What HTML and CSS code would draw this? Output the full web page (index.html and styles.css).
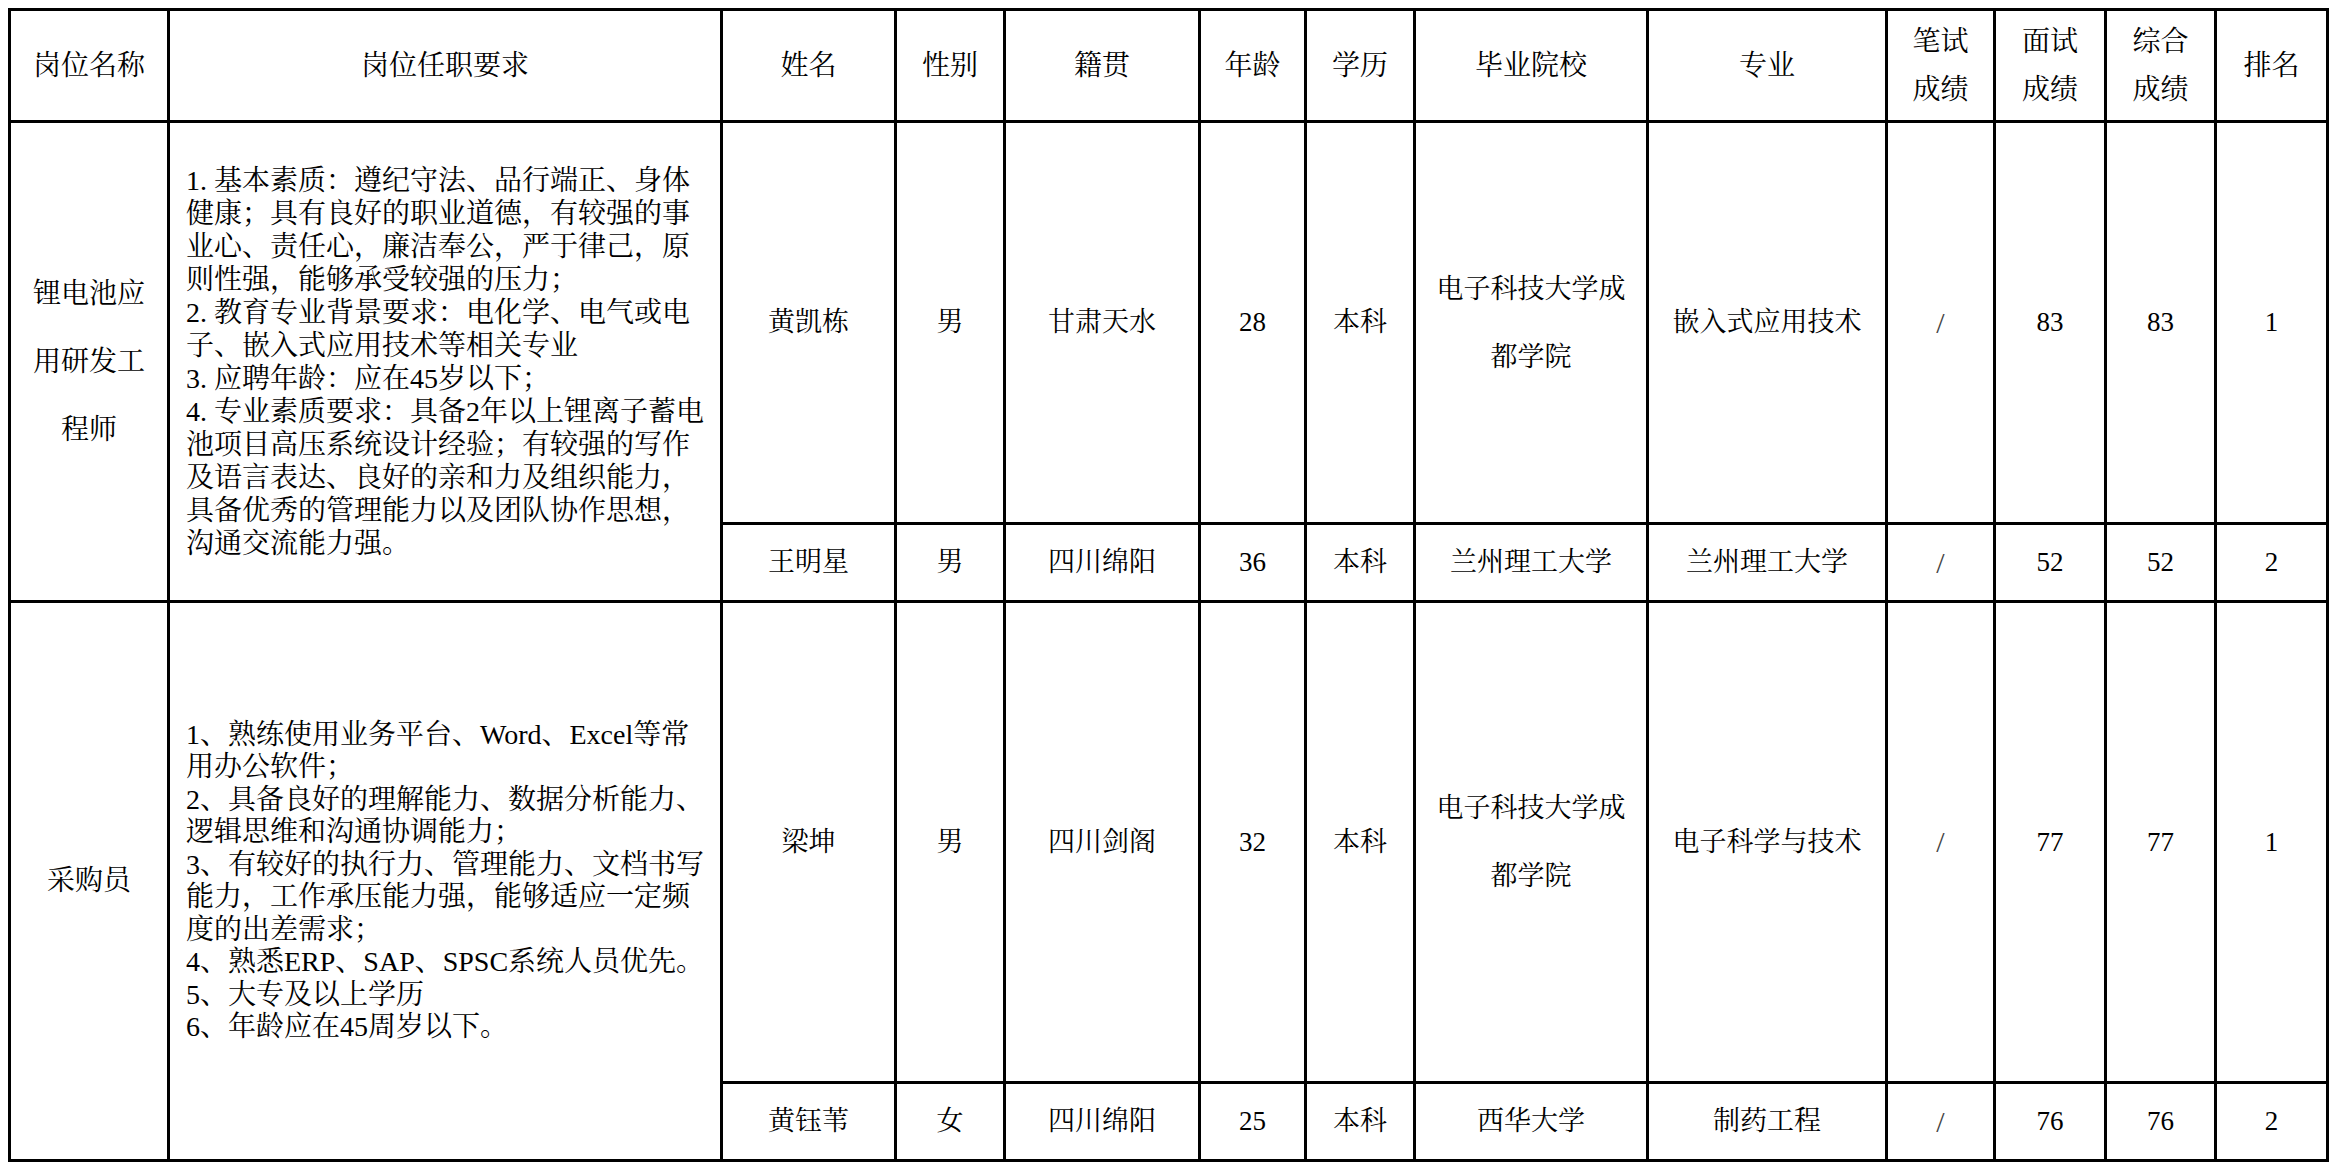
FILE: index.html
```html
<!DOCTYPE html>
<html lang="zh-CN">
<head>
<meta charset="utf-8">
<title>岗位拟录用人员名单</title>
<link rel="stylesheet" href="styles.css">
</head>
<body>
<table class="grid">
  <colgroup>
    <col class="c-post"><col class="c-req"><col class="c-name"><col class="c-sex"><col class="c-home"><col class="c-age"><col class="c-edu"><col class="c-school"><col class="c-major"><col class="c-s1"><col class="c-s2"><col class="c-s3"><col class="c-rank">
  </colgroup>
  <thead>
    <tr class="r-head">
      <th>岗位名称</th>
      <th>岗位任职要求</th>
      <th>姓名</th>
      <th>性别</th>
      <th>籍贯</th>
      <th>年龄</th>
      <th>学历</th>
      <th>毕业院校</th>
      <th>专业</th>
      <th class="two">笔试<br>成绩</th>
      <th class="two">面试<br>成绩</th>
      <th class="two">综合<br>成绩</th>
      <th>排名</th>
    </tr>
  </thead>
  <tbody>
    <tr class="r-a1">
      <td rowspan="2" class="post">锂电池应<br>用研发工<br>程师</td>
      <td rowspan="2" class="req">1.&nbsp;基本素质：遵纪守法、品行端正、身体<br>健康；具有良好的职业道德，有较强的事<br>业心、责任心，廉洁奉公，严于律己，原<br>则性强，能够承受较强的压力；<br>2.&nbsp;教育专业背景要求：电化学、电气或电<br>子、嵌入式应用技术等相关专业<br>3.&nbsp;应聘年龄：应在45岁以下；<br>4.&nbsp;专业素质要求：具备2年以上锂离子蓄电<br>池项目高压系统设计经验；有较强的写作<br>及语言表达、良好的亲和力及组织能力，<br>具备优秀的管理能力以及团队协作思想，<br>沟通交流能力强。</td>
      <td>黄凯栋</td>
      <td>男</td>
      <td>甘肃天水</td>
      <td>28</td>
      <td>本科</td>
      <td class="school">电子科技大学成<br>都学院</td>
      <td>嵌入式应用技术</td>
      <td class="slash">/</td>
      <td>83</td>
      <td>83</td>
      <td>1</td>
    </tr>
    <tr class="r-a2">
      <td>王明星</td>
      <td>男</td>
      <td>四川绵阳</td>
      <td>36</td>
      <td>本科</td>
      <td>兰州理工大学</td>
      <td>兰州理工大学</td>
      <td class="slash">/</td>
      <td>52</td>
      <td>52</td>
      <td>2</td>
    </tr>
    <tr class="r-b1">
      <td rowspan="2" class="post">采购员</td>
      <td rowspan="2" class="req req-b">1、熟练使用业务平台、Word、Excel等常<br>用办公软件；<br>2、具备良好的理解能力、数据分析能力、<br>逻辑思维和沟通协调能力；<br>3、有较好的执行力、管理能力、文档书写<br>能力，工作承压能力强，能够适应一定频<br>度的出差需求；<br>4、熟悉ERP、SAP、SPSC系统人员优先。<br>5、大专及以上学历<br>6、年龄应在45周岁以下。</td>
      <td>梁坤</td>
      <td>男</td>
      <td>四川剑阁</td>
      <td>32</td>
      <td>本科</td>
      <td class="school">电子科技大学成<br>都学院</td>
      <td>电子科学与技术</td>
      <td class="slash">/</td>
      <td>77</td>
      <td>77</td>
      <td>1</td>
    </tr>
    <tr class="r-b2">
      <td>黄钰苇</td>
      <td>女</td>
      <td>四川绵阳</td>
      <td>25</td>
      <td>本科</td>
      <td>西华大学</td>
      <td>制药工程</td>
      <td class="slash">/</td>
      <td>76</td>
      <td>76</td>
      <td>2</td>
    </tr>
  </tbody>
</table>
</body>
</html>
```

FILE: styles.css
```css
html, body {
  margin: 0;
  padding: 0;
  background: #ffffff;
}

.grid {
  border-collapse: collapse;
  table-layout: fixed;
  width: 2321px;
  margin: 8px 0 0 8px;
  font-family: "Liberation Serif", "Noto Serif CJK SC", "Noto Sans CJK SC", serif;
  color: #000000;
}

.c-post   { width: 159px; }
.c-req    { width: 553px; }
.c-name   { width: 174px; }
.c-sex    { width: 109px; }
.c-home   { width: 195px; }
.c-age    { width: 106px; }
.c-edu    { width: 109px; }
.c-school { width: 233px; }
.c-major  { width: 239px; }
.c-s1     { width: 108px; }
.c-s2     { width: 111px; }
.c-s3     { width: 110px; }
.c-rank   { width: 112px; }

.grid th,
.grid td {
  border: 3px solid #000000;
  padding: 0;
  text-align: center;
  vertical-align: middle;
  font-size: 27px;
  line-height: 1.2;
  font-weight: normal;
  white-space: nowrap;
}

.grid th {
  font-size: 28px;
}

.r-head { height: 112px; }
.r-a1   { height: 402px; }
.r-a2   { height: 78px; }
.r-b1   { height: 481px; }
.r-b2   { height: 78px; }

.grid .two {
  line-height: 48px;
}

.grid .post {
  font-size: 28px;
  line-height: 68px;
}

.grid .school {
  line-height: 68px;
}

.grid .slash {
  font-size: 30px;
  color: #444444;
}

.grid .req {
  text-align: left;
  padding-left: 16px;
  font-size: 28px;
  line-height: 33px;
}

.grid .req-b {
  line-height: 32.5px;
}
```
